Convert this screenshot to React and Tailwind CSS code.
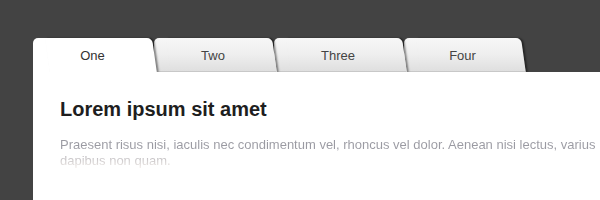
import React from 'react';

const tabs = [
  { label: 'One', width: 'w-[119px]', z: 'z-40', active: true },
  { label: 'Two', width: 'w-[118px]', z: 'z-30' },
  { label: 'Three', width: 'w-[128px]', z: 'z-20' },
  { label: 'Four', width: 'w-[117px]', z: 'z-10' },
];

// Tab with a straight left edge and a right edge that leans outward at the bottom
const Tab = ({ label, width, z, active }) => {
  const bg = active
    ? 'bg-white'
    : 'bg-gradient-to-b from-[#f7f7f7] via-[#eeeeee] to-[#dedede]';
  return (
    <div className={`relative h-[34px] ${width} ${z} shrink-0`}>
      <div className={`absolute inset-y-0 left-0 right-[24px] rounded-tl-[5px] ${bg}`} />
      <div
        className={`absolute inset-y-0 left-[12px] right-0 origin-top skew-x-[8deg] rounded-tr-[5px] ${bg} shadow-[2px_0_2px_rgba(0,0,0,0.45)]`}
      />
      {!active && (
        <div className="absolute bottom-0 left-0 right-[-4px] h-px bg-[#c8c8c8]" />
      )}
      <span
        className={`relative flex h-full items-center justify-center pt-[1px] text-[13px] ${
          active ? 'text-[#333]' : 'text-[#444]'
        }`}
      >
        {label}
      </span>
    </div>
  );
};

export default function App() {
  return (
    <div
      className="flex h-[200px] w-[600px] flex-col overflow-hidden bg-[#434343] pl-[33px] pt-[38px]"
      style={{ fontFamily: '"Liberation Sans", Arial, sans-serif' }}
    >
      <div className="flex gap-[2px]">
        {tabs.map((t) => (
          <Tab key={t.label} {...t} />
        ))}
      </div>
      <div className="relative z-50 w-[620px] flex-1 bg-white pl-[27px] pt-[24px]">
        <h1 className="text-[20px] font-bold leading-[26px] text-[#1e1e1e]">
          Lorem ipsum sit amet
        </h1>
        <p className="mt-[15px] w-[545px] bg-gradient-to-b from-[#9a9aa2] from-35% to-[#f6f0ec] bg-clip-text text-[13px] leading-[16px] text-transparent">
          Praesent risus nisi, iaculis nec condimentum vel, rhoncus vel dolor. Aenean nisi lectus, varius dapibus non quam.
        </p>
      </div>
    </div>
  );
}
